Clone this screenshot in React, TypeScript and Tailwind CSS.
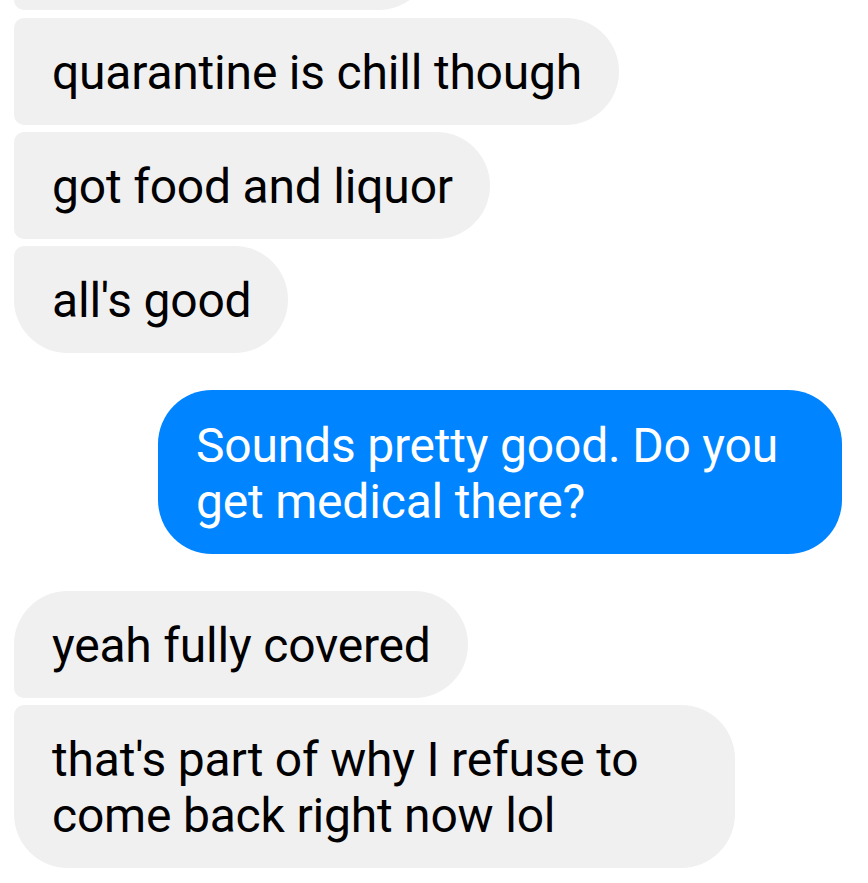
import React from "react";

type Msg = {
  text: string;
  mine?: boolean;
  // position inside a run of messages from the same sender
  pos: "first" | "middle" | "last" | "single";
};

const messages: Msg[] = [
  { text: "quarantine is chill though", pos: "middle" },
  { text: "got food and liquor", pos: "middle" },
  { text: "all's good", pos: "last" },
  { text: "Sounds pretty good. Do you get medical there?", mine: true, pos: "single" },
  { text: "yeah fully covered", pos: "first" },
  { text: "that's part of why I refuse to come back right now lol", pos: "last" },
];

const cornerClass: Record<Msg["pos"], string> = {
  first: "rounded-tl-[54px] rounded-bl-[10px]",
  middle: "rounded-tl-[10px] rounded-bl-[10px]",
  last: "rounded-tl-[10px] rounded-bl-[54px]",
  single: "rounded-tl-[54px] rounded-bl-[54px]",
};

const Bubble = ({ msg }: { msg: Msg }) => {
  if (msg.mine) {
    return (
      <div className="flex justify-end pr-[26px]">
        <div className="w-[684px] rounded-[54px] bg-[#0084ff] px-[38px] pt-[28px] pb-[24px] text-white">
          {msg.text}
        </div>
      </div>
    );
  }
  return (
    <div className="flex justify-start pl-[14px]">
      <div
        className={
          "max-w-[721px] rounded-r-[54px] bg-[#f0f0f0] pl-[38px] pr-[37px] pt-[27px] pb-[24px] text-black " +
          cornerClass[msg.pos]
        }
      >
        {msg.text}
      </div>
    </div>
  );
};

export default function App() {
  return (
    <div
      className="h-[883px] w-[868px] overflow-hidden bg-white text-[48px] leading-[56px] tracking-[-0.2px]"
      style={{ fontFamily: "Roboto, 'Noto Sans', sans-serif" }}
    >
      {/* tail of the previous bubble, cut off by the top of the screen */}
      <div className="-mt-[97px] flex pl-[14px]">
        <div className="h-[107px] w-[418px] rounded-l-[10px] rounded-r-[54px] bg-[#f0f0f0]" />
      </div>
      <div className="mt-[8px] flex flex-col gap-[7px]">
        {messages.slice(0, 3).map((m, i) => (
          <Bubble key={i} msg={m} />
        ))}
      </div>
      <div className="mt-[37px]">
        <Bubble msg={messages[3]} />
      </div>
      <div className="mt-[37px] flex flex-col gap-[7px]">
        {messages.slice(4).map((m, i) => (
          <Bubble key={i} msg={m} />
        ))}
      </div>
    </div>
  );
}
